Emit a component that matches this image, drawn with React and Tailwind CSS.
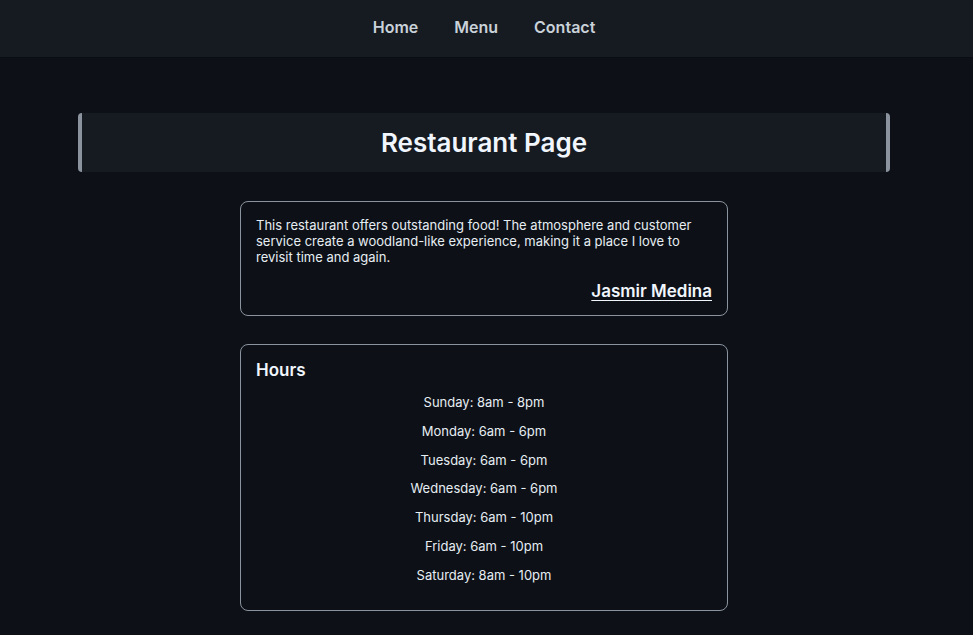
import React from "react";

const hours = [
  "Sunday: 8am - 8pm",
  "Monday: 6am - 6pm",
  "Tuesday: 6am - 6pm",
  "Wednesday: 6am - 6pm",
  "Thursday: 6am - 10pm",
  "Friday: 6am - 10pm",
  "Saturday: 8am - 10pm",
];

export default function App() {
  return (
    <div
      className="min-h-[635px] bg-[#0d1117] text-[#e6edf3]"
      style={{ fontFamily: "Inter, 'Noto Sans', sans-serif" }}
    >
      {/* Nav */}
      <nav className="h-[58px] bg-[#161b22] border-b border-[#0a0d12]">
        <ul className="w-[968px] h-full flex items-center justify-center gap-9 pb-[4px] text-[16px] font-semibold text-[#c9d1d9]">
          <li>Home</li>
          <li>Menu</li>
          <li>Contact</li>
        </ul>
      </nav>

      <main className="w-[968px] flex flex-col items-center pt-[55px] pb-6">
        {/* Title */}
        <div className="w-[812px] h-[59px] flex items-center justify-center bg-[#161b22] border-x-4 border-[#8b949e] rounded-[4px]">
          <h1 className="text-[26px] font-semibold text-[#f0f6fc]">
            Restaurant Page
          </h1>
        </div>

        {/* Review */}
        <div className="mt-[29px] w-[488px] border border-[#8b949e] rounded-lg px-[15px] pt-[15px] pb-[10px]">
          <p className="text-[13px] leading-4">
            This restaurant offers outstanding food! The atmosphere and
            customer service create a woodland-like experience, making it a
            place I love to revisit time and again.
          </p>
          <p className="mt-3 text-right text-[17px] leading-7 font-semibold text-[#f0f6fc] underline underline-offset-[3px]">
            Jasmir Medina
          </p>
        </div>

        {/* Hours */}
        <div className="mt-[28px] w-[488px] border border-[#8b949e] rounded-lg px-[15px] pt-[11px] pb-[27px]">
          <h2 className="text-[17px] leading-7 font-semibold text-[#f0f6fc]">
            Hours
          </h2>
          <div className="mt-[10px] flex flex-col gap-[12.8px] text-[13px] leading-4 text-center">
            {hours.map((h) => (
              <p key={h}>{h}</p>
            ))}
          </div>
        </div>
      </main>
    </div>
  );
}
